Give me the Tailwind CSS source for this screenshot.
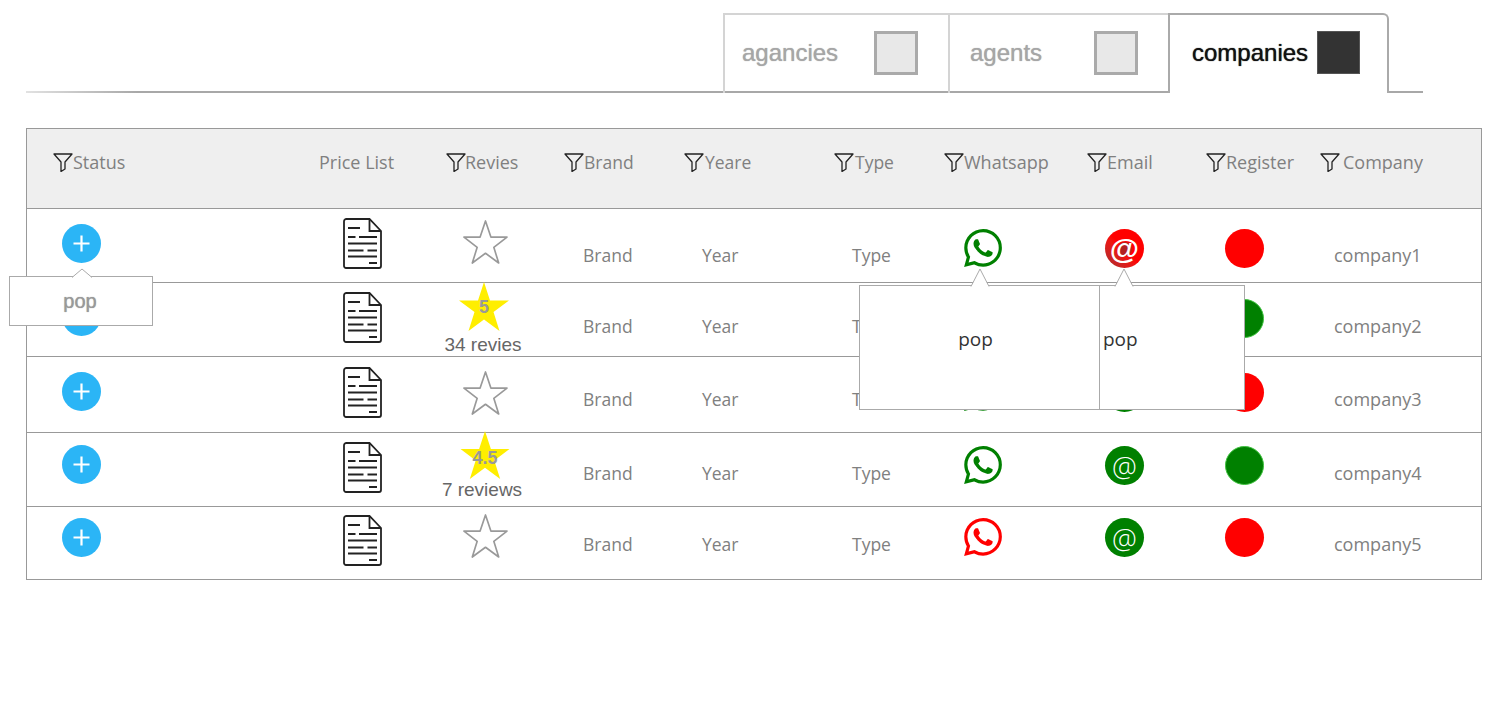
<!DOCTYPE html>
<html lang="en">
<head>
    <meta charset="UTF-8">
    <title>Companies</title>
    <script src="https://cdn.jsdelivr.net/npm/@tailwindcss/browser@4"></script>
</head>
<body class="bg-white font-['Open_Sans',sans-serif] text-[18px] leading-[26px] text-[#808080]">
    <svg class="hidden">
        <defs>
            <symbol id="funnel" viewBox="0 0 20 19"><path d="M1 1h18l-7 8v7l-4 2.500V9z" fill="none" stroke="#222" stroke-width="1.300" stroke-linejoin="round"/></symbol>
            <symbol id="doc" viewBox="0 0 39 51"><g fill="none" stroke="#222" stroke-width="1.800"><path d="M3.500 1h23L38 13v35a2 2 0 0 1-2 2H3a2 2 0 0 1-2-2V3.500A2.500 2.500 0 0 1 3.500 1z"/><path d="M26.500 1v12H38"/><path d="M5 10h12M5 19h7.500M16 19h18M5 25.500h29M5 32.500h15.500M24.500 32.500h9.500M5 38.500h29M26 45h8"/></g></symbol>
            <symbol id="wa" viewBox="0 0 24 24"><path fill="currentColor" d="M17.472 14.382c-.297-.149-1.758-.867-2.030-.967-.273-.099-.471-.148-.670.150-.197.297-.767.966-.940 1.164-.173.199-.347.223-.644.075-.297-.150-1.255-.463-2.390-1.475-.883-.788-1.480-1.761-1.653-2.059-.173-.297-.018-.458.130-.606.134-.133.298-.347.446-.520.149-.174.198-.298.298-.497.099-.198.050-.371-.025-.520-.075-.149-.669-1.612-.916-2.207-.242-.579-.487-.500-.669-.510-.173-.008-.371-.010-.570-.010-.198 0-.520.074-.792.372-.272.297-1.040 1.016-1.040 2.479 0 1.462 1.065 2.875 1.213 3.074.149.198 2.096 3.200 5.077 4.487.709.306 1.262.489 1.694.625.712.227 1.360.195 1.871.118.571-.085 1.758-.719 2.006-1.413.248-.694.248-1.289.173-1.413-.074-.124-.272-.198-.570-.347m-5.421 7.403h-.004a9.870 9.870 0 0 1-5.031-1.378l-.361-.214-3.741.982.998-3.648-.235-.374a9.860 9.860 0 0 1-1.510-5.260c.001-5.450 4.436-9.884 9.888-9.884 2.640 0 5.122 1.030 6.988 2.898a9.825 9.825 0 0 1 2.893 6.994c-.003 5.450-4.437 9.884-9.885 9.884m8.413-18.297A11.815 11.815 0 0 0 12.050 0C5.495 0 .160 5.335.157 11.892c0 2.096.547 4.142 1.588 5.945L.057 24l6.305-1.654a11.882 11.882 0 0 0 5.683 1.448h.005c6.554 0 11.890-5.335 11.893-11.893a11.821 11.821 0 0 0-3.480-8.413z"/></symbol>
            <symbol id="plus" viewBox="0 0 39 39"><circle cx="19.500" cy="19.500" r="19.500" fill="#2bb5f6"/><path d="M19.500 11.500v16M11.500 19.500h16" stroke="#fff" stroke-width="2.200"/></symbol>
            <symbol id="star" viewBox="0 0 46 46"><path d="M23 2l5.500 16.500H45L31.500 29l5 16L23 35l-13.500 10 5-16L1 18.500h16.500z" fill="#fff" stroke="#999" stroke-width="1.700" stroke-linejoin="round"/></symbol>
            <symbol id="star-on" viewBox="0 0 50 49"><path d="M25 0l6 18.500h19L34.500 30l6 19L25 37.500 9.500 49l6-19L0 18.500h19z" fill="#ffee00"/></symbol>
        </defs>
    </svg>

    <!-- tabs -->
    <div class="ml-[26px] w-[1397px] pt-[13px]">
        <div class="flex justify-end pr-[34px] font-['Liberation_Sans',sans-serif] text-[24px] leading-[30px] [text-shadow:0_0_1px_currentColor]">
            <div class="flex h-[80px] w-[225px] items-center justify-between border-l-2 border-t-2 border-[#d4d4d4] pb-[3px] pl-[17px] pr-[30px] text-[#a6a6a6]">
                <span>agancies</span>
                <span class="size-[44px] border-[3px] border-[#aaa] bg-[#e8e8e8]"></span>
            </div>
            <div class="flex h-[80px] w-[220px] items-center justify-between border-l-2 border-t-2 border-[#d4d4d4] pb-[3px] pl-[20px] pr-[30px] text-[#a6a6a6]">
                <span>agents</span>
                <span class="size-[44px] border-[3px] border-[#aaa] bg-[#e8e8e8]"></span>
            </div>
            <div class="relative z-10 flex h-[80px] w-[221px] items-center gap-[9px] rounded-tr-md border-x-2 border-t-2 border-[#aaa] bg-white pb-[3px] pl-[22px] text-[#111]">
                <span>companies</span>
                <span class="size-[43px] border border-[#555] bg-[#333]"></span>
            </div>
        </div>
        <div class="-mt-[2px] h-[2px] bg-linear-to-r from-[#e2e2e2] to-[#a8a8a8] to-[8%]"></div>
    </div>

    <!-- table -->
    <div class="relative ml-[26px] mt-[35px] w-[1456px] border border-[#999]">
        <div class="grid h-[80px] grid-cols-[273px_130px_120px_120px_150px_110px_140px_120px_116px_175px] border-b border-[#999] bg-[#efefef] pt-[21px]">
            <div class="flex h-[24px] items-center pl-[26px]"><svg class="h-[19px] w-[20px]"><use href="#funnel"/></svg>Status</div>
            <div class="flex h-[24px] items-center pl-[19px]">Price List</div>
            <div class="flex h-[24px] items-center pl-[16px]"><svg class="-mr-[1px] h-[19px] w-[20px]"><use href="#funnel"/></svg>Revies</div>
            <div class="flex h-[24px] items-center pl-[14px] text-[17.500px]"><svg class="h-[19px] w-[20px]"><use href="#funnel"/></svg>Brand</div>
            <div class="flex h-[24px] items-center pl-[14px] text-[17.500px]"><svg class="mr-[1px] h-[19px] w-[20px]"><use href="#funnel"/></svg>Yeare</div>
            <div class="flex h-[24px] items-center pl-[14px] text-[17.500px]"><svg class="mr-[1px] h-[19px] w-[20px]"><use href="#funnel"/></svg>Type</div>
            <div class="flex h-[24px] items-center pl-[14px]"><svg class="h-[19px] w-[20px]"><use href="#funnel"/></svg>Whatsapp</div>
            <div class="flex h-[24px] items-center pl-[17px]"><svg class="h-[19px] w-[20px]"><use href="#funnel"/></svg>Email</div>
            <div class="flex h-[24px] items-center pl-[16px]"><svg class="h-[19px] w-[20px]"><use href="#funnel"/></svg>Register</div>
            <div class="flex h-[24px] items-center pl-[14px]"><svg class="mr-[3px] h-[19px] w-[20px]"><use href="#funnel"/></svg>Company</div>
        </div>

        <!-- row 1 -->
        <div class="grid h-[74px] grid-cols-[273px_130px_120px_120px_150px_110px_140px_120px_116px_175px] border-b border-[#999]">
            <div class="pl-[35px] pt-[15px]"><svg class="size-[39px]"><use href="#plus"/></svg></div>
            <div class="pl-[43px] pt-[9px]"><svg class="h-[51px] w-[39px]"><use href="#doc"/></svg></div>
            <div class="flex justify-center pr-[10px] pt-[10px]"><svg class="size-[45px]"><use href="#star"/></svg></div>
            <div class="pl-[33px] pt-[33px] text-[17.500px]">Brand</div>
            <div class="pl-[32px] pt-[33px] text-[17.500px]">Year</div>
            <div class="pl-[32px] pt-[33px] text-[17.500px]">Type</div>
            <div class="pl-[34px] pt-[20px] text-[#008000]"><svg class="size-[38px]"><use href="#wa"/></svg></div>
            <div class="pl-[35px] pt-[20px]"><div class="grid size-[39px] place-items-center rounded-full bg-linear-to-bl from-[#f00] from-50% to-[#a52a2a] font-['Liberation_Sans',sans-serif] text-[30px] font-bold text-white"><span class="col-start-1 row-start-1 size-[14px] rounded-full bg-[#b22222]"></span><span class="col-start-1 row-start-1">@</span></div></div>
            <div class="pl-[35px] pt-[20px]"><div class="size-[39px] rounded-full bg-[#f00]"></div></div>
            <div class="pl-[28px] pt-[33px]">company1</div>
        </div>

        <!-- row 2 -->
        <div class="grid h-[74px] grid-cols-[273px_130px_120px_120px_150px_110px_140px_120px_116px_175px] border-b border-[#999]">
            <div class="pl-[35px] pt-[14px]"><svg class="size-[39px]"><use href="#plus"/></svg></div>
            <div class="pl-[43px] pt-[9px]"><svg class="h-[51px] w-[39px]"><use href="#doc"/></svg></div>
            <div class="flex flex-col items-center pr-[14px]">
                <div class="-mt-[1px] ml-[2px] grid justify-items-center"><svg class="col-start-1 row-start-1 h-[49px] w-[50px]"><use href="#star-on"/></svg><span class="col-start-1 row-start-1 pt-[13px] font-['Liberation_Sans',sans-serif] text-[18px] leading-[24px] font-bold text-[#999]">5</span></div>
                <div class="mt-[2px] whitespace-nowrap font-['Liberation_Sans',sans-serif] text-[19px] leading-[24px] text-[#666]">34 revies</div>
            </div>
            <div class="pl-[33px] pt-[30px] text-[17.500px]">Brand</div>
            <div class="pl-[32px] pt-[30px] text-[17.500px]">Year</div>
            <div class="pl-[32px] pt-[30px] text-[17.500px]">Type</div>
            <div class="pl-[34px] pt-[17px] text-[#008000]"><svg class="size-[38px]"><use href="#wa"/></svg></div>
            <div class="pl-[35px] pt-[17px]"><div class="size-[39px] rounded-full bg-[#008000]"></div></div>
            <div class="pl-[35px] pt-[16px]"><div class="size-[39px] rounded-full border border-[#3fc23f] bg-[#008000]"></div></div>
            <div class="pl-[28px] pt-[30px]">company2</div>
        </div>

        <!-- row 3 -->
        <div class="grid h-[76px] grid-cols-[273px_130px_120px_120px_150px_110px_140px_120px_116px_175px] border-b border-[#999]">
            <div class="pl-[35px] pt-[15px]"><svg class="size-[39px]"><use href="#plus"/></svg></div>
            <div class="pl-[43px] pt-[10px]"><svg class="h-[51px] w-[39px]"><use href="#doc"/></svg></div>
            <div class="flex justify-center pr-[10px] pt-[13px]"><svg class="size-[45px]"><use href="#star"/></svg></div>
            <div class="pl-[33px] pt-[29px] text-[17.500px]">Brand</div>
            <div class="pl-[32px] pt-[29px] text-[17.500px]">Year</div>
            <div class="pl-[32px] pt-[29px] text-[17.500px]">Type</div>
            <div class="pl-[34px] pt-[16px] text-[#008000]"><svg class="size-[38px]"><use href="#wa"/></svg></div>
            <div class="pl-[35px] pt-[16px]"><div class="size-[39px] rounded-full bg-[#008000]"></div></div>
            <div class="pl-[35px] pt-[16px]"><div class="size-[39px] rounded-full bg-[#f00]"></div></div>
            <div class="pl-[28px] pt-[29px]">company3</div>
        </div>

        <!-- row 4 -->
        <div class="grid h-[74px] grid-cols-[273px_130px_120px_120px_150px_110px_140px_120px_116px_175px] border-b border-[#999]">
            <div class="pl-[35px] pt-[12px]"><svg class="size-[39px]"><use href="#plus"/></svg></div>
            <div class="pl-[43px] pt-[9px]"><svg class="h-[51px] w-[39px]"><use href="#doc"/></svg></div>
            <div class="flex flex-col items-center pr-[16px]">
                <div class="-mt-[2px] ml-[6px] grid justify-items-center"><svg class="col-start-1 row-start-1 h-[48px] w-[50px]"><use href="#star-on"/></svg><span class="col-start-1 row-start-1 pt-[15px] font-['Liberation_Sans',sans-serif] text-[18px] leading-[24px] font-bold text-[#999]">4.5</span></div>
                <div class="-mt-[1px] whitespace-nowrap font-['Liberation_Sans',sans-serif] text-[19px] leading-[24px] text-[#666]">7 reviews</div>
            </div>
            <div class="pl-[33px] pt-[27px] text-[17.500px]">Brand</div>
            <div class="pl-[32px] pt-[27px] text-[17.500px]">Year</div>
            <div class="pl-[32px] pt-[27px] text-[17.500px]">Type</div>
            <div class="pl-[34px] pt-[13px] text-[#008000]"><svg class="size-[38px]"><use href="#wa"/></svg></div>
            <div class="pl-[35px] pt-[13px]"><div class="flex size-[39px] items-center justify-center rounded-full bg-[#008000] text-[28px] font-light text-white">@</div></div>
            <div class="pl-[35px] pt-[13px]"><div class="size-[39px] rounded-full border border-[#3fc23f] bg-[#008000]"></div></div>
            <div class="pl-[28px] pt-[27px]">company4</div>
        </div>

        <!-- row 5 -->
        <div class="grid h-[72px] grid-cols-[273px_130px_120px_120px_150px_110px_140px_120px_116px_175px]">
            <div class="pl-[35px] pt-[11px]"><svg class="size-[39px]"><use href="#plus"/></svg></div>
            <div class="pl-[43px] pt-[8px]"><svg class="h-[51px] w-[39px]"><use href="#doc"/></svg></div>
            <div class="flex justify-center pr-[10px] pt-[6px]"><svg class="size-[45px]"><use href="#star"/></svg></div>
            <div class="pl-[33px] pt-[24px] text-[17.500px]">Brand</div>
            <div class="pl-[32px] pt-[24px] text-[17.500px]">Year</div>
            <div class="pl-[32px] pt-[24px] text-[17.500px]">Type</div>
            <div class="pl-[34px] pt-[11px] text-[#f00]"><svg class="size-[38px]"><use href="#wa"/></svg></div>
            <div class="pl-[35px] pt-[11px]"><div class="flex size-[39px] items-center justify-center rounded-full bg-[#008000] text-[28px] font-light text-white">@</div></div>
            <div class="pl-[35px] pt-[11px]"><div class="size-[39px] rounded-full bg-[#f00]"></div></div>
            <div class="pl-[28px] pt-[24px]">company5</div>
        </div>

        <!-- popovers -->
        <div class="absolute left-[-18px] top-[147px] z-20 flex h-[50px] w-[144px] items-center justify-center border border-[#aaa] bg-white pr-[2px] font-['Liberation_Sans',sans-serif] text-[20px] text-[#999] [text-shadow:0_0_1px_currentColor]">
            pop
            <svg class="absolute left-[60px] top-[-9px] h-[10px] w-[24px]" viewBox="0 0 24 10"><path d="M2 9.500L12 1l10 8.500" fill="#fff" stroke="#aaa"/></svg>
        </div>
        <div class="absolute left-[832px] top-[156px] z-20 flex h-[125px] w-[241px] items-center justify-center border border-[#aaa] bg-white pb-[17px] pr-[8px] text-[19px] text-[#333]">
            pop
            <svg class="absolute left-[110px] top-[-18px] h-[19px] w-[20px]" viewBox="0 0 20 19"><path d="M1 18.500L10 1l9 17.500" fill="#fff" stroke="#aaa"/></svg>
        </div>
        <div class="absolute left-[1072px] top-[156px] z-20 flex h-[125px] w-[146px] items-center border border-[#aaa] bg-white pb-[17px] pl-[3px] text-[19px] text-[#333]">
            pop
            <svg class="absolute left-[14px] top-[-18px] h-[19px] w-[20px]" viewBox="0 0 20 19"><path d="M1 18.500L10 1l9 17.500" fill="#fff" stroke="#aaa"/></svg>
        </div>
    </div>
</body>
</html>
